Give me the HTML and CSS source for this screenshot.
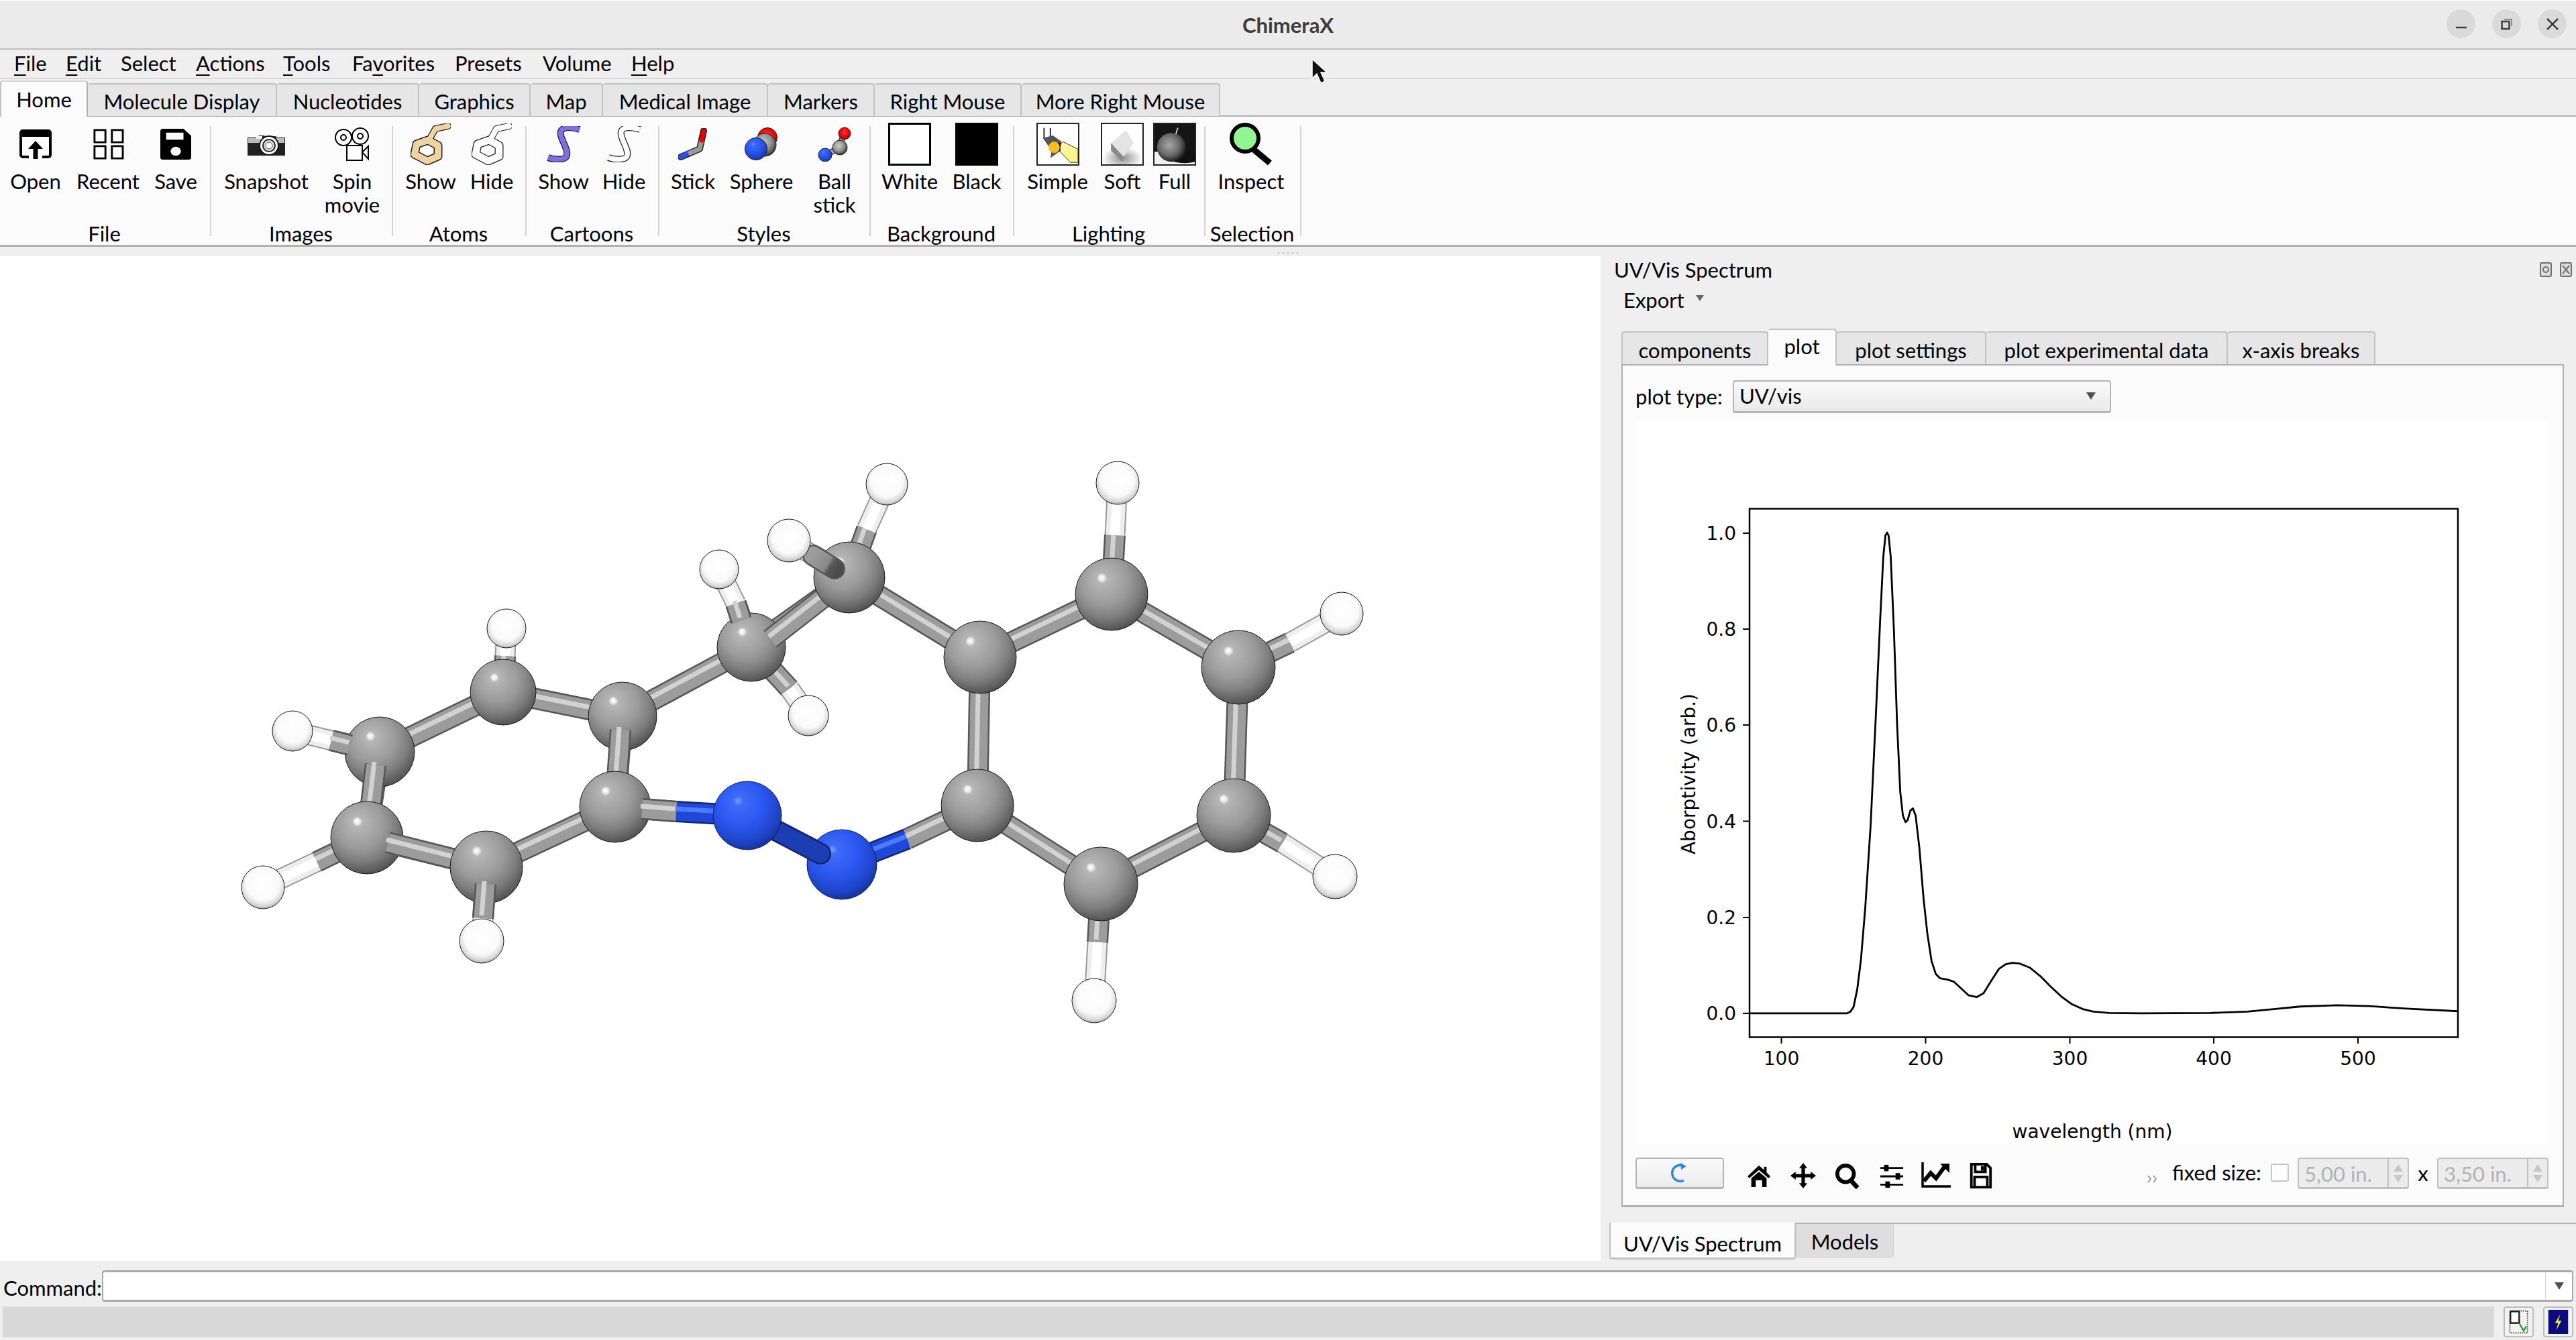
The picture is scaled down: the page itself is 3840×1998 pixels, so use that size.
FILE: index.html
```html
<!DOCTYPE html>
<html lang="en">
<head>
<meta charset="utf-8">
<title>ChimeraX</title>
<link rel="stylesheet" href="styles.css">
</head>
<body>
<svg class="defs" width="0" height="0" aria-hidden="true">
  <defs>
    <radialGradient id="gc" cx=".44" cy=".36" r=".7" fx=".36" fy=".27">
      <stop offset="0" stop-color="#fff"/><stop offset=".05" stop-color="#eee"/><stop offset=".1" stop-color="#b6b6b6"/>
      <stop offset=".48" stop-color="#9a9a9a"/><stop offset=".7" stop-color="#7e7e7e"/><stop offset=".88" stop-color="#5c5c5c"/><stop offset="1" stop-color="#444"/>
    </radialGradient>
    <radialGradient id="gh" cx=".5" cy=".42" r=".62">
      <stop offset="0" stop-color="#fff"/><stop offset=".62" stop-color="#fafafa"/><stop offset=".84" stop-color="#d6d6d6"/><stop offset="1" stop-color="#8e8e8e"/>
    </radialGradient>
    <radialGradient id="gn" cx=".44" cy=".36" r=".7" fx=".36" fy=".28">
      <stop offset="0" stop-color="#7aa0ff"/><stop offset=".1" stop-color="#3e6cf8"/><stop offset=".5" stop-color="#2a56f0"/><stop offset=".78" stop-color="#1f44c8"/><stop offset="1" stop-color="#132c84"/>
    </radialGradient>
    <radialGradient id="gr" cx=".5" cy=".4" r=".6">
      <stop offset="0" stop-color="#ff3030"/><stop offset=".7" stop-color="#e80000"/><stop offset="1" stop-color="#800"/>
    </radialGradient>
    <radialGradient id="ga" cx=".42" cy=".38" r=".65">
      <stop offset="0" stop-color="#cfcfcf"/><stop offset=".6" stop-color="#8c8c8c"/><stop offset="1" stop-color="#2c2c2c"/>
    </radialGradient>
    <radialGradient id="gf" cx=".42" cy=".42" r=".6">
      <stop offset="0" stop-color="#a8a8a8"/><stop offset=".6" stop-color="#6a6a6a"/><stop offset="1" stop-color="#1a1a1a"/>
    </radialGradient>
    <radialGradient id="gso" cx=".5" cy=".5" r=".5">
      <stop offset="0" stop-color="#8d8d8d"/><stop offset="1" stop-color="#8d8d8d" stop-opacity="0"/>
    </radialGradient>
    <linearGradient id="gb" x1="0" y1="0" x2="1" y2="1">
      <stop offset="0" stop-color="#fffbb0"/><stop offset="1" stop-color="#fff57c"/>
    </linearGradient>
    <linearGradient id="gd" gradientUnits="userSpaceOnUse" x1="1212" y1="828" x2="1250" y2="852">
      <stop offset="0" stop-color="#9c9c9c"/><stop offset=".55" stop-color="#8a8a8a"/><stop offset=".7" stop-color="#565656"/><stop offset="1" stop-color="#4a4a4a"/>
    </linearGradient>
    <path id="b-gray" d="M928 1068L917 1203L725 1293L547 1249L566 1121L750 1032L928 1068M928 1068L1120 965L1266 861L1461 980L1457 1201L1641 1318L1839 1216L1846 995L1657 886L1461 980M917 1203L1008 1210M1457 1201L1352 1251M750 1032L753 978M566 1121L494 1104M547 1249L472 1285M725 1293L720 1369M1120 965L1097 900M1120 965L1177 1027M1266 861L1212 828M1266 861L1292 789M1657 886L1662 798M1846 995L1923 958M1839 1216L1912 1257M1641 1318L1636 1405"/>
    <path id="b-white" d="M753 978L755 937M494 1104L436 1090M472 1285L392 1323M720 1369L718 1403M1097 900L1072 849M1177 1027L1205 1067M1212 828L1176 806M1292 789L1322 722M1662 798L1666 720M1923 958L2000 915M1912 1257L1990 1307M1636 1405L1631 1492"/>
    <path id="b-blue" d="M1008 1210L1114 1216L1255 1289L1352 1251"/>
    <path id="s-c1" d="M917 1203L925 1088"/>
    <path id="s-c5" d="M547 1249L560 1140"/>
    <path id="s-c4" d="M725 1293L578 1256"/>
    <path id="s-c3" d="M720 1369L724 1318"/>
    <path id="s-ch" d="M1266 861L1148 953"/>
    <path id="s-ch3" d="M1212 828L1244 848"/>
    <path id="s-ch4" d="M1097 900L1105 925"/>
    <path id="s-c2" d="M1008 1210L957 1206"/>
    <path id="s-c5h" d="M494 1104L522 1111"/>
    <path id="s-n" d="M1114 1216L1223 1273"/>
    <path id="m-ring" d="M26 25L41 33L41 49L25 56L6 46L9 31Z"/>
    <path id="m-tail" d="M28 24L37 8L56 4"/>
    <path id="m-rib" d="M51 5C38 1 26 1 23 8C20 18 37 36 31 46C27 51 12 50 4 47"/>
    <symbol id="ic-floppy" viewBox="0 0 48 48">
      <path d="M4 0H36L48 11V44A4 4 0 0 1 44 48H4A4 4 0 0 1 0 44V4A4 4 0 0 1 4 0Z"/>
      <rect x="9" y="6" width="27" height="11" fill="#fbfbfb"/>
      <ellipse cx="24" cy="35" rx="8" ry="7" fill="#fbfbfb"/>
    </symbol>
  </defs>
</svg>

<header class="titlebar">
  <span class="title">ChimeraX</span>
  <div class="wincontrols">
    <span class="winbtn"><svg class="winicon" viewBox="0 0 18 18"><path d="M1 14H17" class="wstroke"/></svg></span>
    <span class="winbtn"><svg class="winicon" viewBox="0 0 18 18"><rect x="1.500" y="5" width="11" height="11" class="wstroke"/><path d="M5 2H16V12" class="wfaint"/></svg></span>
    <span class="winbtn"><svg class="winicon" viewBox="0 0 18 18"><path d="M1 1L17 17M17 1L1 17" class="wstroke"/></svg></span>
  </div>
</header>

<nav class="menubar">
  <span><u>F</u>ile</span><span><u>E</u>dit</span><span>Select</span><span><u>A</u>ctions</span><span><u>T</u>ools</span><span>Fa<u>v</u>orites</span><span>Presets</span><span>Volume</span><span><u>H</u>elp</span>
</nav>
<svg class="cursor" viewBox="0 0 24 40"><path d="M2 2V31L9 24L15 38L21 35L15 22H24Z" fill="#111" stroke="#fff" stroke-width="1.500"/></svg>

<div class="ribbontabs">
  <span class="rtab active">Home</span><span class="rtab">Molecule Display</span><span class="rtab">Nucleotides</span><span class="rtab">Graphics</span><span class="rtab">Map</span><span class="rtab">Medical Image</span><span class="rtab">Markers</span><span class="rtab">Right Mouse</span><span class="rtab">More Right Mouse</span>
</div>

<section class="ribbon">
  <div class="group g-file">
    <div class="btns">
      <div class="btn"><div class="icon"><svg class="i48" viewBox="0 0 48 44"><path d="M14 41H5A3 3 0 0 1 2 38V5A3 3 0 0 1 5 2H43A3 3 0 0 1 46 5V38A3 3 0 0 1 43 41H34" fill="none" stroke="#000" stroke-width="4"/><rect x="2" y="2" width="44" height="9"/><path d="M24 17L35 29H27.500V44H20.500V29H13Z"/></svg></div>Open</div>
      <div class="btn"><div class="icon"><svg class="i48" viewBox="0 0 48 48"><path d="M3 2H20V21H3ZM30 2H47V21H30ZM3 27H20V46H3ZM30 27H47V46H30Z" fill="none" stroke="#000" stroke-width="3"/></svg></div>Recent</div>
      <div class="btn"><div class="icon"><svg class="i48"><use href="#ic-floppy"/></svg></div>Save</div>
    </div>
    <div class="glabel">File</div>
  </div>
  <div class="group g-images">
    <div class="btns">
      <div class="btn"><div class="icon"><svg class="i58" viewBox="0 0 58 36"><path d="M1 8H16L18 5H26L28 8H57V35H1Z" fill="#222"/><rect x="2" y="9" width="54" height="7" fill="#bbb"/><rect x="14" y="6" width="9" height="4" fill="#eee"/><rect x="32" y="6" width="12" height="7" fill="#444"/><circle cx="33" cy="20" r="14" fill="#fff" stroke="#111" stroke-width="2"/><circle cx="33" cy="20" r="9" fill="#ddd" stroke="#222" stroke-width="2"/><circle cx="33" cy="20" r="5" fill="#fff" stroke="#555"/></svg></div>Snapshot</div>
      <div class="btn"><div class="icon"><svg class="i52" viewBox="0 0 52 50" fill="#fff" stroke="#000" stroke-width="2"><circle cx="13" cy="15" r="12"/><circle cx="13" cy="15" r="4"/><circle cx="38" cy="13" r="12"/><circle cx="38" cy="13" r="4"/><rect x="18" y="27" width="23" height="22"/><path d="M41 37L50 28V47Z"/></svg></div>Spin<br>movie</div>
    </div>
    <div class="glabel">Images</div>
  </div>
  <div class="group g-atoms">
    <div class="btns">
      <div class="btn"><div class="icon"><svg class="i60" viewBox="0 0 60 62" fill="none"><use href="#m-tail" class="t-o"/><use href="#m-ring" class="r-o"/><use href="#m-tail" class="t-tan"/><use href="#m-ring" class="r-tan"/></svg></div>Show</div>
      <div class="btn"><div class="icon"><svg class="i60" viewBox="0 0 60 62" fill="none"><use href="#m-tail" class="t-o"/><use href="#m-ring" class="r-o"/><use href="#m-tail" class="t-wh"/><use href="#m-ring" class="r-wh"/></svg></div>Hide</div>
    </div>
    <div class="glabel">Atoms</div>
  </div>
  <div class="group g-cartoons">
    <div class="btns">
      <div class="btn"><div class="icon"><svg class="i53" viewBox="0 0 54 54" fill="none"><use href="#m-rib" class="o3"/><use href="#m-rib" class="pur"/></svg></div>Show</div>
      <div class="btn"><div class="icon"><svg class="i53" viewBox="0 0 54 54" fill="none"><use href="#m-rib" class="o3"/><use href="#m-rib" class="wh3"/></svg></div>Hide</div>
    </div>
    <div class="glabel">Cartoons</div>
  </div>
  <div class="group g-styles">
    <div class="btns">
      <div class="btn"><div class="icon"><svg class="i44" viewBox="0 0 44 48" fill="none" stroke-linecap="round" stroke-linejoin="round"><path d="M4 43L32 31L38 4" stroke="#222" stroke-width="10"/><path d="M4 43L18 36" stroke="#2c50e8" stroke-width="7"/><path d="M18 37L32 31L35 18" stroke="#999" stroke-width="7"/><path d="M35 18L38 4" stroke="#e80000" stroke-width="7"/></svg></div>Stick</div>
      <div class="btn"><div class="icon"><svg class="i50" viewBox="0 0 50 52"><circle cx="34" cy="16" r="14.500" fill="url(#gr)" stroke="#222"/><circle cx="30" cy="27" r="17" fill="url(#ga)" stroke="#222"/><circle cx="17" cy="33" r="16.500" fill="url(#gn)" stroke="#222"/></svg></div>Sphere</div>
      <div class="btn"><div class="icon"><svg class="i50" viewBox="0 0 50 52"><path d="M39 9L33 31L12 42" stroke="#333" stroke-width="9" fill="none"/><path d="M39 9L33 31L12 42" stroke="#aaa" stroke-width="6" fill="none"/><circle cx="40" cy="10" r="9" fill="url(#gr)" stroke="#222"/><circle cx="33" cy="31" r="11" fill="url(#ga)" stroke="#222"/><circle cx="11" cy="42" r="10" fill="url(#gn)" stroke="#222"/></svg></div>Ball<br>stick</div>
    </div>
    <div class="glabel">Styles</div>
  </div>
  <div class="group g-bg">
    <div class="btns">
      <div class="btn"><div class="icon"><span class="swatch white"></span></div>White</div>
      <div class="btn"><div class="icon"><span class="swatch black"></span></div>Black</div>
    </div>
    <div class="glabel">Background</div>
  </div>
  <div class="group g-light">
    <div class="btns">
      <div class="btn"><div class="icon"><svg class="i64 boxed" viewBox="0 0 64 64"><rect width="64" height="64" fill="#fff"/><path d="M30 38L52 61H64V40L40 28Z" fill="url(#gb)" stroke="#222"/><path d="M10 6V22M20 6V22" stroke="#222" stroke-width="2"/><path d="M8 22L24 18L38 28L34 44L20 54L22 42Z" fill="#555"/><path d="M20 30L36 30L36 43L24 46Z" fill="#000"/><circle cx="26" cy="37" r="9" fill="#fbbf1c"/></svg></div>Simple</div>
      <div class="btn"><div class="icon"><svg class="i64 boxed" viewBox="0 0 64 64"><rect width="64" height="64" fill="#fff"/><ellipse cx="32" cy="54" rx="32" ry="18" fill="url(#gso)"/><path d="M38 10L50 30L34 52L14 30Z" fill="#e4e4e4"/><path d="M14 30L34 52L32 60L14 42Z" fill="#8a8a8a"/></svg></div>Soft</div>
      <div class="btn"><div class="icon"><svg class="i64 boxed" viewBox="0 0 64 64"><rect width="64" height="64" fill="#151515"/><rect y="44" width="64" height="20" fill="#f0f0f0"/><ellipse cx="48" cy="52" rx="26" ry="10" fill="#111"/><circle cx="27" cy="37" r="23" fill="url(#gf)"/><path d="M34 16L37 6" stroke="#ccc" stroke-width="2"/></svg></div>Full</div>
    </div>
    <div class="glabel">Lighting</div>
  </div>
  <div class="group g-sel">
    <div class="btns">
      <div class="btn"><div class="icon"><svg class="i64" viewBox="0 0 64 64"><path d="M36 40L60 60" stroke="#000" stroke-width="9"/><circle cx="23" cy="23" r="20" fill="#94f594" stroke="#000" stroke-width="6"/></svg></div>Inspect</div>
    </div>
    <div class="glabel">Selection</div>
  </div>
</section>

<div class="hsplit"><span class="dots"></span></div>

<main class="workspace">
  <svg class="viewer" viewBox="0 382 2386 1498">
    <g class="sticks">
      <use href="#b-gray" class="so"/><use href="#b-gray" class="sm"/><use href="#b-gray" class="sh"/>
      <use href="#b-white" class="wo"/><use href="#b-white" class="wm"/><use href="#b-white" class="wh1"/>
      <use href="#b-blue" class="no"/><use href="#b-blue" class="nm"/><use href="#b-blue" class="nh"/>
    </g>
    <g class="catom">
      <circle cx="928" cy="1068" r="51"/><circle cx="750" cy="1032" r="49"/><circle cx="566" cy="1121" r="52"/><circle cx="1120" cy="965" r="51"/><circle cx="1461" cy="980" r="54"/><circle cx="1457" cy="1201" r="54"/><circle cx="1641" cy="1318" r="55"/><circle cx="1839" cy="1216" r="55"/><circle cx="1846" cy="995" r="55"/><circle cx="1657" cy="886" r="54"/>
    </g>
    <g class="sticks">
      <use href="#s-c1" class="so"/><use href="#s-c1" class="sm"/><use href="#s-c1" class="sh"/>
      <use href="#s-c5" class="so"/><use href="#s-c5" class="sm"/><use href="#s-c5" class="sh"/>
      <use href="#s-ch" class="so"/><use href="#s-ch" class="sm"/><use href="#s-ch" class="sh"/>
      <use href="#s-c5h" class="so"/><use href="#s-c5h" class="sm"/><use href="#s-c5h" class="sh"/>
      <use href="#s-ch4" class="so"/><use href="#s-ch4" class="sm"/><use href="#s-ch4" class="sh"/>
    </g>
    <g class="catom">
      <circle cx="547" cy="1249" r="54"/>
    </g>
    <g class="sticks">
      <use href="#s-c4" class="so"/><use href="#s-c4" class="sm"/><use href="#s-c4" class="sh"/>
    </g>
    <g class="catom">
      <circle cx="725" cy="1293" r="54"/><circle cx="917" cy="1203" r="53"/><circle cx="1266" cy="861" r="53"/>
    </g>
    <g class="sticks">
      <use href="#s-c3" class="so"/><use href="#s-c3" class="sm"/><use href="#s-c3" class="sh"/>
      <use href="#s-c2" class="so"/><use href="#s-c2" class="sm"/><use href="#s-c2" class="sh"/>
      <use href="#s-ch3" class="so rnd"/><use href="#s-ch3" class="sm dk rnd"/>
    </g>
    <g class="natom">
      <circle cx="1255" cy="1289" r="52"/>
    </g>
    <g class="sticks"><use href="#s-n" class="no rnd"/><use href="#s-n" class="nm dkn rnd"/></g>
    <g class="natom">
      <circle cx="1114" cy="1216" r="51"/>
    </g>
    <g class="hatom">
      <circle cx="755" cy="937" r="29"/><circle cx="436" cy="1090" r="30"/><circle cx="392" cy="1323" r="32"/><circle cx="718" cy="1403" r="33"/><circle cx="1072" cy="849" r="29"/><circle cx="1205" cy="1067" r="30"/><circle cx="1176" cy="806" r="32"/><circle cx="1322" cy="722" r="31"/><circle cx="1666" cy="720" r="32"/><circle cx="2000" cy="915" r="32"/><circle cx="1990" cy="1307" r="33"/><circle cx="1631" cy="1492" r="33"/>
    </g>
  </svg>

  <aside class="dock">
    <div class="dockhead">
      <span class="docktitle">UV/Vis Spectrum</span>
      <span class="dockbtns">
        <svg class="dbtn" viewBox="0 0 18 22"><rect x="1" y="1" width="16" height="20" rx="2"/><circle cx="9" cy="11" r="4"/></svg>
        <svg class="dbtn" viewBox="0 0 18 22"><rect x="1" y="1" width="16" height="20" rx="2"/><path d="M4 5L14 17M14 5L4 17"/></svg>
      </span>
    </div>
    <div class="exportrow">Export<span class="arrow-small"></span></div>
    <div class="dtabs">
      <span class="dtab">components</span><span class="dtab active">plot</span><span class="dtab">plot settings</span><span class="dtab">plot experimental data</span><span class="dtab">x-axis breaks</span>
    </div>
    <div class="pane">
      <div class="typerow">
        <label class="typelabel">plot type:</label>
        <div class="combo">UV/vis<span class="arrow-down"></span></div>
      </div>
      <svg class="plot" viewBox="2438 626 1362 1078">
        <rect x="2608" y="756.500" width="1056" height="788" class="frame"/>
        <path class="ticks" d="M2655.500 1544V1554M2870.500 1544V1554M3085.500 1544V1554M3300 1544V1554M3515 1544V1554M2608 1509H2598M2608 1366H2598M2608 1222.500H2598M2608 1079H2598M2608 936H2598M2608 793H2598"/>
        <g transform="translate(2480 720) scale(.7908 .6378)">
          <polyline class="curve" points="162,1237 345,1237 352,1233 358,1222 365,1180 372,1110 380,990 390,800 400,540 408,320 414,170 418,120 421,113 424,120 428,170 434,340 440,560 446,720 451,775 456,790 460,785 465,763 470,758 475,775 482,850 490,970 497,1050 505,1115 513,1145 521,1155 535,1158 547,1163 560,1178 575,1195 590,1199 603,1190 618,1160 632,1133 645,1122 658,1119 672,1121 690,1130 710,1150 730,1175 750,1198 770,1216 790,1227 810,1233 840,1236 900,1237 1030,1236 1100,1233 1150,1227 1200,1221 1270,1218 1330,1220 1400,1226 1497,1232"/>
        </g>
        <g class="ptext xt">
          <text x="2655.500" y="1586">100</text><text x="2870.500" y="1586">200</text><text x="3085.500" y="1586">300</text><text x="3300" y="1586">400</text><text x="3515" y="1586">500</text>
          <text x="3119" y="1695">wavelength (nm)</text>
        </g>
        <g class="ptext yt">
          <text x="2588" y="1519">0.0</text><text x="2588" y="1376">0.2</text><text x="2588" y="1233">0.4</text><text x="2588" y="1089">0.6</text><text x="2588" y="946">0.8</text><text x="2588" y="803">1.0</text>
        </g>
        <text class="ptext ylab" transform="translate(2527 1152) rotate(-90)">Aborptivity (arb.)</text>
      </svg>
      <div class="plotbar">
        <button class="refresh"><svg class="rf" viewBox="0 0 30 30"><path d="M20 4A12 12 0 1 0 21 26" fill="none" stroke="#2e86d8" stroke-width="3.500"/><path d="M16 0L25 5L17 10Z" fill="#2e86d8"/></svg></button>
        <div class="navicons">
          <svg class="nav" viewBox="0 0 40 40"><path d="M20 4L28 11V6H32V15L38 21L35 24L20 11L5 24L2 21ZM8 24L20 14L32 24V38H25V27H15V38H8Z"/></svg>
          <svg class="nav" viewBox="0 0 44 44"><path d="M22 0L29 9H25V19H35V15L44 22L35 29V25H25V35H29L22 44L15 35H19V25H9V29L0 22L9 15V19H19V9H15Z"/></svg>
          <svg class="nav" viewBox="0 0 40 40"><circle cx="17" cy="17" r="13" fill="none" stroke="#000" stroke-width="6"/><path d="M25 27L36 39" stroke="#000" stroke-width="7"/></svg>
          <svg class="nav" viewBox="0 0 40 40"><path d="M2 8H38M2 21H38M2 34H38" stroke="#000" stroke-width="3"/><rect x="8" y="3" width="7" height="10"/><rect x="26" y="16" width="7" height="10"/><rect x="10" y="29" width="7" height="10"/></svg>
          <svg class="nav wide" viewBox="0 0 44 40"><path d="M2 0V36H44" fill="none" stroke="#000" stroke-width="3.500"/><path d="M4 28L14 16L22 24L36 5" fill="none" stroke="#000" stroke-width="6"/><path d="M28 2H42V16Z"/></svg>
          <svg class="nav" viewBox="0 0 40 40"><path d="M6 2H30L36 8V38H6Z M12 4V14H28V4 M11 38V22H31V38" fill="none" stroke="#000" stroke-width="4"/><rect x="21" y="5" width="5" height="7"/></svg>
        </div>
        <svg class="more" viewBox="0 0 16 12"><path d="M1 1L5 6L1 11M9 1L13 6L9 11" fill="none" stroke="#888" stroke-width="1.500"/></svg>
        <span class="fixedlbl">fixed size:</span>
        <span class="check"></span>
        <div class="spin"><span class="spintext">5,00 in.</span><span class="spinarrows"><i class="up"></i><i class="down"></i></span></div>
        <span class="xlbl">x</span>
        <div class="spin"><span class="spintext">3,50 in.</span><span class="spinarrows"><i class="up"></i><i class="down"></i></span></div>
      </div>
    </div>
    <div class="docktabs">
      <span class="docktab active">UV/Vis Spectrum</span><span class="docktab">Models</span>
    </div>
  </aside>
</main>

<div class="commandbar">
  <label class="cmdlabel">Command:</label>
  <div class="cmdinput"><span class="cmdarrow"><span class="arrow-down"></span></span></div>
</div>
<footer class="statusbar">
  <div class="statusmsg"></div>
  <button class="statbtn"><svg class="staticon" viewBox="0 0 36 44"><rect x="2" y="2" width="32" height="40" fill="none" stroke="#333" stroke-width="2" stroke-dasharray="2 2"/><rect x="3" y="3" width="16" height="21" fill="#fff" stroke="#222" stroke-width="3"/><path d="M20 26L27 38L32 30" fill="none" stroke="#1fa32f" stroke-width="3"/></svg></button>
  <button class="statbtn"><svg class="staticon" viewBox="0 0 36 44"><rect width="36" height="44" fill="#0b0b80"/><path d="M22 8L12 24H18L14 38L24 20H18Z" fill="#f5e52a"/></svg></button>
</footer>
</body>
</html>
```
FILE: styles.css
```css
* { box-sizing: border-box; }
html, body { margin: 0; padding: 0; }
body {
  width: 3840px;
  height: 1998px;
  overflow: hidden;
  display: flex;
  flex-direction: column;
  background: #efefef;
  color: #000;
  font-family: "Lato", "Noto Sans", sans-serif;
  font-size: 31px;
  line-height: 35px;
}
.defs { position: absolute; }

.titlebar {
  height: 74px;
  flex: none;
  background: #ebebeb;
  border-top: 2px solid #f6f6f6;
  border-bottom: 2px solid #bdbdbd;
  display: flex;
  align-items: center;
  justify-content: center;
  position: relative;
}
.title { font-weight: 700; color: #3d3d3d; }
.wincontrols { position: absolute; right: 14px; top: 12px; display: flex; gap: 25px; }
.winbtn { width: 43px; height: 43px; border-radius: 50%; background: #dadada; display: flex; align-items: center; justify-content: center; }
.winicon { width: 18px; height: 18px; fill: none; }
.wstroke { stroke: #3d3d3d; stroke-width: 2.500; fill: none; }
.wfaint { stroke: #8a8a8a; stroke-width: 2; fill: none; }

.menubar {
  height: 44px;
  flex: none;
  background: #efefef;
  border-bottom: 2px solid #d9d9d9;
  padding: 3px 0 0 21px;
  display: grid;
  grid-template-columns: 77px 82px 112px 130px 103px 153px 131px 132px auto;
}
.menubar u { text-decoration-thickness: 2px; text-underline-offset: 5px; }
.cursor { position: absolute; left: 1954px; top: 86px; width: 24px; height: 40px; }

.ribbontabs {
  height: 56px;
  flex: none;
  padding: 0;
  display: grid;
  grid-template-columns: 131px 282px 212px 166px 108px 246px 159px 219px 296px;
  grid-template-rows: 56px;
  justify-content: start;
  position: relative;
  border-bottom: 2px solid #b0b0b0;
}
.rtab {
  margin-top: 6px;
  height: 49px;
  background: #e6e6e6;
  border: 2px solid #c2c2c2;
  border-bottom: 0;
  border-left-width: 0;
  border-radius: 4px 4px 0 0;
  text-align: center;
  padding-top: 8px;
}
.rtab.active {
  margin-top: 2px;
  height: 54px;
  background: #fbfbfb;
  border: 2px solid #c2c2c2;
  border-bottom: 0;
  border-top-color: #d5d5d5;
  border-right-color: #b0b0b0;
  padding-top: 9px;
  z-index: 1;
}

.ribbon {
  height: 194px;
  flex: none;
  background: #fbfbfb;
  border-bottom: 3px solid #b0b0b0;
  padding-top: 9px;
  display: flex;
}
.group {
  height: 183px;
  display: grid;
  grid-template-rows: 148px 35px;
  background: linear-gradient(#d4d4d4, #d4d4d4) right 5px / 2px 164px no-repeat;
}
.glabel { text-align: center; padding-right: 4px; }
.btns { display: grid; }
.btn { text-align: center; }
.icon { height: 64px; margin-bottom: 6px; display: flex; align-items: center; justify-content: center; }
.g-file { width: 315px; }
.g-file .btns { grid-template-columns: 106px 110px 92px; }
.g-images { width: 271px; }
.g-images .btns { grid-template-columns: 164px 92px; }
.g-atoms { width: 199px; }
.g-atoms .btns { grid-template-columns: 112px 70px; }
.g-cartoons { width: 198px; }
.g-cartoons .btns { grid-template-columns: 110px 70px; }
.g-styles { width: 315px; }
.g-styles .btns { grid-template-columns: 88px 116px 102px; padding-left: 6px; }
.g-bg { width: 214px; }
.g-bg .btns { grid-template-columns: 112px 88px; padding-left: 2px; }
.g-light { width: 285px; }
.g-light .btns { grid-template-columns: 113px 80px 76px; padding-left: 8px; }
.g-sel { width: 143px; }
.g-sel .btns { grid-template-columns: 136px; }

.i48 { width: 48px; height: 46px; }
.i58 { width: 58px; height: 36px; }
.i52 { width: 52px; height: 50px; }
.i60 { width: 60px; height: 62px; }
.i53 { width: 54px; height: 54px; }
.i44 { width: 44px; height: 48px; }
.i50 { width: 50px; height: 52px; }
.i64 { width: 64px; height: 64px; }
.boxed { border: 2px solid #222; }
.swatch { width: 64px; height: 64px; border: 3px solid #000; display: block; }
.swatch.white { background: #fff; }
.swatch.black { background: #000; }
.t-o { stroke: #222; stroke-width: 10; stroke-linejoin: round; stroke-linecap: round; }
.r-o { stroke: #222; stroke-width: 13; stroke-linejoin: round; }
.t-tan { stroke: #efd3a2; stroke-width: 7.500; stroke-linejoin: round; stroke-linecap: round; }
.r-tan { stroke: #efd3a2; stroke-width: 10; stroke-linejoin: round; }
.t-wh { stroke: #fff; stroke-width: 8; stroke-linejoin: round; stroke-linecap: round; }
.r-wh { stroke: #fff; stroke-width: 10.500; stroke-linejoin: round; }
.o3 { stroke: #222; stroke-width: 10; stroke-linecap: butt; }
.pur { stroke: #7c6fe2; stroke-width: 7.500; stroke-linecap: butt; }
.wh3 { stroke: #fff; stroke-width: 7.500; stroke-linecap: butt; }

.hsplit { height: 14px; flex: none; display: flex; justify-content: center; align-items: flex-end; padding: 0 0 4px 0; }
.dots { width: 35px; height: 2px; margin-left: 4px; background: repeating-linear-gradient(90deg, #b5b5b5 0 2px, transparent 2px 7px); }

.workspace { height: 1498px; flex: none; display: flex; }
.viewer { width: 2386px; height: 1498px; flex: none; background: #fff; display: block; }

.sticks use { fill: none; stroke-linecap: butt; stroke-linejoin: bevel; }
.sticks use.rnd { stroke-linecap: round; }
.so { stroke: #565656; stroke-width: 32; }
.sm { stroke: #9c9c9c; stroke-width: 27; }
.sh { stroke: #d2d2d2; stroke-width: 7; transform: translate(-2px, -4px); }
.wo { stroke: #9a9a9a; stroke-width: 31; }
.wm { stroke: #eeeeee; stroke-width: 27; }
.wh1 { stroke: #ffffff; stroke-width: 14; }
.no { stroke: #14256e; stroke-width: 32; }
.nm { stroke: #1f48d8; stroke-width: 27; }
.nh { stroke: #4d7bff; stroke-width: 7; transform: translate(-1px, -4px); }
.sm.dk { stroke: url(#gd); }
.nm.dkn { stroke: #1c3eb4; }
.catom circle { fill: url(#gc); stroke: #1a1a1a; stroke-width: 1; }
.hatom circle { fill: url(#gh); stroke: #1a1a1a; stroke-width: 1; }
.natom circle { fill: url(#gn); stroke: #10204e; stroke-width: 1; }

.dock { flex: 1; display: flex; flex-direction: column; min-width: 0; }
.dockhead { height: 40px; margin-bottom: 3px; flex: none; padding-left: 20px; display: flex; align-items: center; justify-content: space-between; }
.dockbtns { display: flex; gap: 12px; margin: 0 6px 0 0; }
.dbtn { width: 18px; height: 22px; fill: #dedede; stroke: #6f6f6f; stroke-width: 2; }
.dbtn path, .dbtn circle { fill: none; }
.exportrow { height: 44px; flex: none; padding-left: 34px; display: flex; align-items: center; }
.arrow-small { width: 0; height: 0; margin: -6px 0 0 17px; border: 6px solid transparent; border-top: 9px solid #666; border-bottom: 0; }
.dtabs {
  height: 55px;
  margin: 21px 18px 0 31px;
  flex: none;
  display: grid;
  grid-template-columns: 219px 102px 223px 360px 220px;
  justify-content: start;
  border-bottom: 2px solid #b0b0b0;
}
.dtab {
  margin-top: 4px;
  height: 49px;
  background: #e6e6e6;
  border: 2px solid #c2c2c2;
  border-bottom: 0;
  border-left-width: 0;
  border-radius: 4px 4px 0 0;
  text-align: center;
  padding-top: 9px;
}
.dtab:first-child { border-left-width: 2px; }
.dtab.active {
  margin-top: 0;
  height: 55px;
  background: #fbfbfb;
  padding-top: 7px;
  z-index: 1;
  position: relative;
}
.pane {
  height: 1255px;
  margin: 0 18px 0 31px;
  flex: none;
  background: #fbfbfb;
  border: 2px solid #b0b0b0;
  border-top: 0;
  border-bottom: 3px solid #b0b0b0;
  padding: 22px 20px 0 19px;
  display: flex;
  flex-direction: column;
}
.typerow { height: 49px; flex: none; display: flex; align-items: center; }
.typelabel { width: 145px; flex: none; }
.combo {
  width: 564px;
  height: 49px;
  display: flex;
  align-items: center;
  justify-content: space-between;
  padding: 0 21px 2px 8px;
  background: linear-gradient(#fafafa, #eaeaea);
  border: 2px solid #b4b4b4;
  border-bottom-width: 3px;
  border-radius: 4px;
}
.arrow-down { width: 0; height: 0; border: 7px solid transparent; border-top: 11px solid #4f4f4f; border-bottom: 0; }
.plot { width: 1362px; height: 1078px; margin-top: 12px; background: #fff; display: block; flex: none; }
.frame { fill: none; stroke: #000; stroke-width: 2.500; }
.ticks { stroke: #000; stroke-width: 2; fill: none; }
.curve { fill: none; stroke: #000; stroke-width: 2.800; stroke-linejoin: round; vector-effect: non-scaling-stroke; }
.ptext { font-family: "DejaVu Sans", sans-serif; font-size: 28px; fill: #000; }
.xt { text-anchor: middle; }
.yt { text-anchor: end; }
.ylab { text-anchor: middle; }
.plotbar { height: 47px; margin-top: 20px; flex: none; display: flex; align-items: center; }
.refresh {
  width: 132px;
  height: 47px;
  padding: 0;
  display: flex;
  align-items: center;
  justify-content: center;
  background: linear-gradient(#fafafa, #ececec);
  border: 2px solid #b4b4b4;
  border-bottom-width: 3px;
  border-radius: 4px;
  flex: none;
}
.rf { width: 30px; height: 30px; }
.navicons { width: 631px; padding-left: 19px; display: grid; grid-template-columns: repeat(6, 66px); justify-items: center; align-items: center; flex: none; margin-top: 6px; }
.nav { width: 38px; height: 40px; }
.nav.wide { width: 44px; }
.more { width: 16px; height: 12px; margin: 16px 21px 0 0; flex: none; }
.fixedlbl { width: 147px; flex: none; margin-top: -2px; }
.check { width: 27px; height: 27px; flex: none; background: #fdfdfd; border: 2px solid #c6c6c6; border-radius: 3px; margin: -2px 13px 0 0; }
.spin {
  width: 166px;
  height: 47px;
  flex: none;
  display: flex;
  background: #ececec;
  border: 2px solid #c2c2c2;
  border-bottom-width: 3px;
  border-radius: 4px;
  color: #b2b2b2;
}
.spintext { flex: 1; padding: 5px 0 0 8px; }
.spinarrows { width: 30px; border-left: 2px solid #c2c2c2; display: flex; flex-direction: column; align-items: center; justify-content: space-around; padding: 5px 0; }
.spinarrows i { width: 0; height: 0; border: 7px solid transparent; }
.spinarrows .up { border-bottom: 11px solid #c6c6c6; border-top: 0; }
.spinarrows .down { border-top: 11px solid #c6c6c6; border-bottom: 0; }
.xlbl { width: 42px; text-align: center; flex: none; }
.docktabs { height: 57px; margin: 23px 0 0 13px; flex: none; display: flex; position: relative; background: linear-gradient(#b4b4b4, #b4b4b4) top / 100% 2px no-repeat; }
.docktab {
  width: 146px;
  height: 50px;
  margin-top: 2px;
  text-align: center;
  padding-top: 9px;
  background: #dedede;
  border: 1px solid #cfcfcf;
  border-top: 0;
  border-radius: 0 0 4px 4px;
}
.docktab.active {
  width: 278px;
  height: 55px;
  margin-top: 0;
  padding-top: 14px;
  background: #fbfbfb;
  border: 2px solid #c2c2c2;
  border-top: 0;
  border-bottom-width: 3px;
}

.commandbar { height: 68px; flex: none; display: flex; align-items: flex-start; padding: 14px 4px 0 5px; }
.cmdlabel { width: 147px; flex: none; padding-top: 9px; }
.cmdinput {
  flex: 1;
  height: 47px;
  background: #fff;
  border: 2px solid #ababab;
  border-width: 3px 2px 3px 2px;
  border-radius: 4px;
  display: flex;
  justify-content: flex-end;
}
.cmdarrow { width: 40px; border-left: 1px solid #d6d6d6; display: flex; align-items: center; justify-content: center; }
.statusbar { height: 46px; flex: none; display: flex; padding-left: 4px; gap: 14px; }
.statusmsg { width: 3714px; height: 46px; background: #d8d8d8; flex: none; }
.statbtn { width: 45px; height: 46px; padding: 3px; flex: none; background: #f2f2f2; border: 2px solid #bdbdbd; border-radius: 4px; display: flex; align-items: center; justify-content: center; }
.staticon { width: 33px; height: 36px; }
```
